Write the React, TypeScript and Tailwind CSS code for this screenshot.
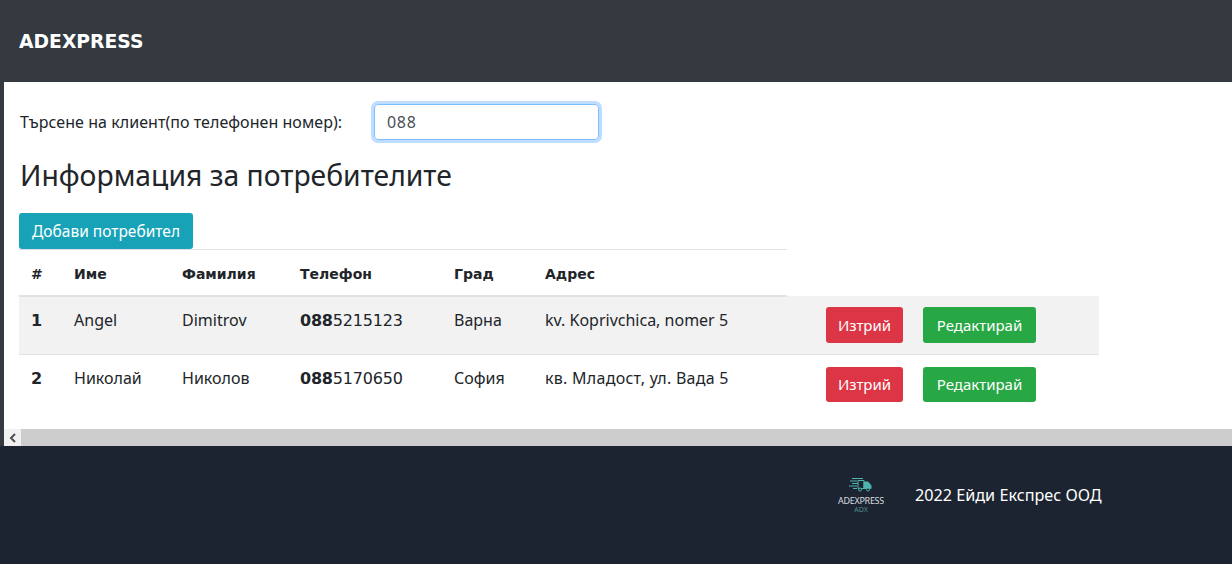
const rows = [
  { id: 1, first: 'Angel', last: 'Dimitrov', phone: '5215123', city: 'Варна', address: 'kv. Koprivchica, nomer 5' },
  { id: 2, first: 'Николай', last: 'Николов', phone: '5170650', city: 'София', address: 'кв. Младост, ул. Вада 5' },
]

const heads = ['#', 'Име', 'Фамилия', 'Телефон', 'Град', 'Адрес']

function FooterLogo() {
  return (
    <div className="flex w-[46px] flex-col items-center">
      <svg width="24" height="15" viewBox="0 0 24 15" fill="none" stroke="#4fb3ad" strokeWidth="1">
        <path d="M3 1.5h11M1 4h7M3 6.5h6M0 9h8M4 11.500h4" />
        <path d="M9 3.500h6v8H9z" fill="#1b2430" />
        <path d="M15 5h4l3 3.500v3h-7z" fill="#4fb3ad" />
        <circle cx="11" cy="12.500" r="1.500" fill="#1b2430" />
        <circle cx="19" cy="12.500" r="1.500" fill="#1b2430" />
      </svg>
      <span className="mt-1 text-[9px] leading-[10px] tracking-[-0.3px] text-[#d9dde0]">ADEXPRESS</span>
      <span className="text-[7px] leading-[7px] text-[#4f8f8c]">ADX</span>
    </div>
  )
}

export default function App() {
  return (
    <div className="flex h-[564px] flex-col overflow-hidden bg-white font-['Noto_Sans',sans-serif] text-[15px] text-[#212529]">
      <header className="flex h-[82px] items-center bg-[#343a40] px-[19px] pt-[2px]">
        <a href="#top" className="font-['DejaVu_Sans',sans-serif] text-[18.75px] font-bold text-white">ADEXPRESS</a>
      </header>

      <main className="flex flex-1 flex-col border-l-4 border-[#343a40]">
        <div className="flex-1 px-[15px]">
          <div className="flex items-center pt-[22px]">
            <label className="w-[355px] pl-px text-[16px] tracking-[0.05px]">Търсене на клиент(по телефонен номер):</label>
            <input
              readOnly
              value="088"
              className="h-[36px] w-[225px] rounded border border-[#80bdff] px-3 text-base tracking-[0.7px] text-[#495057] shadow-[0_0_0_3px_rgba(0,123,255,0.25)] outline-none"
            />
          </div>
          <h2 className="mt-[14px] pl-px text-[28.3px] leading-[42px]">Информация за потребителите</h2>
          <button className="mt-[17px] block h-[36px] w-[174px] rounded-[3px] bg-[#17a2b8] pt-px text-[15.5px] text-white">Добави потребител</button>

          <table className="w-[1080px] table-fixed border-collapse">
            <colgroup>
              <col className="w-[43px]" />
              <col className="w-[108px]" />
              <col className="w-[118px]" />
              <col className="w-[154px]" />
              <col className="w-[91px]" />
              <col className="w-[254px]" />
              <col />
            </colgroup>
            <thead>
              <tr className="h-[46px]">
                {heads.map((h) => (
                  <th key={h} className="border-t border-b-2 border-[#dee2e6] px-3 pt-[4px] text-left font-['DejaVu_Sans',sans-serif] text-[14px] font-bold">{h}</th>
                ))}
              </tr>
            </thead>
            <tbody>
              {rows.map((r) => {
                const cell = r.id === 1 ? 'px-3 pb-[10px]' : 'px-3 pb-[11px]'
                return (
                  <tr key={r.id} className="border-b border-[#dee2e6] last:border-b-0 odd:bg-[#f2f2f2]">
                    <td className={cell + " pt-[2px] font-['DejaVu_Sans',sans-serif] text-[16px] font-bold"}>{r.id}</td>
                    <td className={cell + ' text-[16px] tracking-[0.01px]'}>{r.first}</td>
                    <td className={cell + ' text-[16px] tracking-[0.01px]'}>{r.last}</td>
                    <td className={cell + " pt-[2px] font-['DejaVu_Sans',sans-serif] text-[16px] tracking-[-0.2px]"}><b>088</b>{r.phone}</td>
                    <td className={cell + ' text-[16px] tracking-[0.01px]'}>{r.city}</td>
                    <td className={cell + (r.id === 1 ? ' text-[16px]' : ' text-[16px] tracking-[0.27px]')}>{r.address}</td>
                    <td className={r.id === 1 ? 'pb-[11px] pl-[39px] pt-[11px]' : 'pb-[11px] pl-[39px] pt-[12px]'}>
                      <div className="flex gap-5 text-[15px]">
                        <button className={(r.id === 1 ? 'h-[36px]' : 'h-[35px]') + ' w-[77px] rounded-[3px] bg-[#dc3545] pt-px text-white'}>Изтрий</button>
                        <button className={(r.id === 1 ? 'h-[36px]' : 'h-[35px]') + ' w-[113px] rounded-[3px] bg-[#28a745] pt-px text-white'}>Редактирай</button>
                      </div>
                    </td>
                  </tr>
                )
              })}
            </tbody>
          </table>
        </div>

        <div className="flex h-[17px] bg-[#cdcdcd]">
          <div className="flex w-[17px] items-center justify-center bg-[#f1f1f1]">
            <svg width="8" height="10" viewBox="0 0 8 10" fill="none" stroke="#505050" strokeWidth="2">
              <path d="M6 1 2 5l4 4" />
            </svg>
          </div>
        </div>
      </main>

      <footer className="flex h-[118px] items-start bg-[#1b2430] pl-[838px] pt-[31px]">
        <FooterLogo />
        <span className="ml-[31px] mt-[6px] text-[16.2px] text-white">2022 Ейди Експрес ООД</span>
      </footer>
    </div>
  )
}
